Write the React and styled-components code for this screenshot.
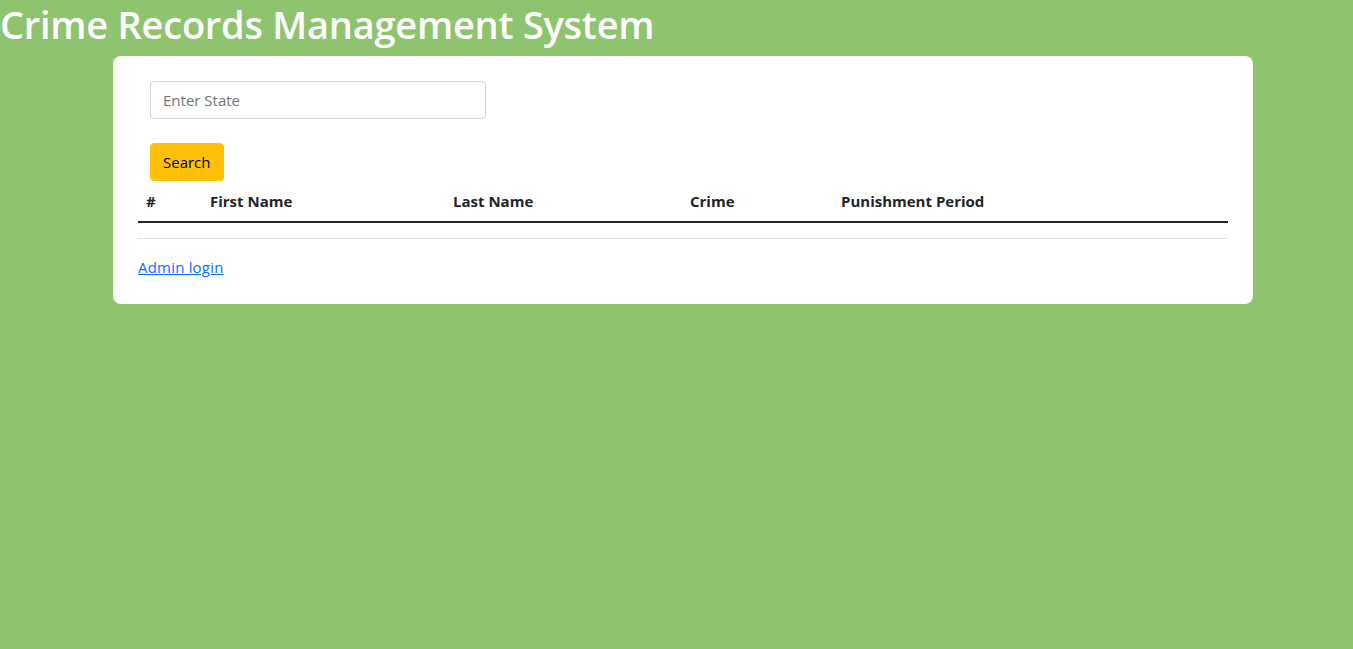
import React from 'react'
import styled, { createGlobalStyle } from 'styled-components'

const GlobalStyle = createGlobalStyle`
  * { box-sizing: border-box; }
  body {
    margin: 0;
    background: #8ec46f;
    font-family: "Open Sans", "Liberation Sans", sans-serif;
    font-size: 15px;
    line-height: 1.5;
    color: #212529;
  }
`

const Title = styled.h1`
  margin: 0 0 8px;
  font-size: 38px;
  font-weight: 600;
  line-height: 48px;
  color: #fff;
  letter-spacing: -0.25px;
`

const Card = styled.div`
  width: 1140px;
  margin: 0 0 0 113px;
  background: #fff;
  border-radius: 8px;
  padding: 25px 25px 26px;
`

const Form = styled.form`
  display: flex;
  flex-direction: column;
  align-items: flex-start;
  gap: 24px;
  padding: 0 12px;
`

const Input = styled.input`
  width: 336px;
  height: 38px;
  padding: 6px 12px;
  font: inherit;
  color: #212529;
  border: 1px solid #ced4da;
  border-radius: 4px;
  outline: none;
  &::placeholder { color: #6c757d; }
`

const Button = styled.button`
  height: 38px;
  padding: 6px 12px;
  font: inherit;
  color: #000;
  background: #ffc107;
  border: 1px solid #ffc107;
  border-radius: 4px;
  cursor: pointer;
`

const Table = styled.table`
  width: 100%;
  margin: 1px 0 16px;
  border-collapse: collapse;
`

const Th = styled.th`
  width: ${p => p.$w}px;
  padding: 8px;
  text-align: left;
  font-weight: 700;
  border-bottom: 2px solid #212529;
`

const Divider = styled.hr`
  margin: -1px 0 17px;
  border: 0;
  border-top: 1px solid #dee2e6;
`

const AdminLink = styled.a`
  color: #0d6efd;
  text-decoration: underline;
  letter-spacing: 0.2px;
`

const columns = [
  ['#', 64],
  ['First Name', 243],
  ['Last Name', 237],
  ['Crime', 151],
  ['Punishment Period', 395],
]

export default function App() {
  return (
    <>
      <GlobalStyle />
      <Title>Crime Records Management System</Title>
      <Card>
        <Form onSubmit={e => e.preventDefault()}>
          <Input placeholder="Enter State" />
          <Button type="submit">Search</Button>
        </Form>
        <Table>
          <thead>
            <tr>
              {columns.map(([label, w]) => (
                <Th key={label} $w={w}>{label}</Th>
              ))}
            </tr>
          </thead>
          <tbody></tbody>
        </Table>
        <Divider />
        <AdminLink href="#">Admin login</AdminLink>
      </Card>
    </>
  )
}
